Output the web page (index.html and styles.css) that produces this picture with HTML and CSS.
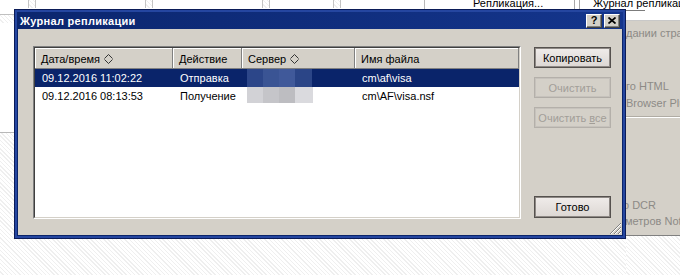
FILE: index.html
```html
<!DOCTYPE html>
<html lang="ru">
<head>
    <meta charset="UTF-8">
    <title>Журнал репликации</title>
    <link rel="stylesheet" href="styles.css">
</head>
<body>
<div class="Desktop">

    <!-- what is left visible of the page behind the dialog -->
    <div class="TopStrip">
        <span class="Gap GapA"></span>
        <span class="Post Hatch"></span>
        <span class="Gap GapB"></span>
        <span class="Post Hatch"></span>
        <span class="Gap GapC"></span>
        <span class="Post Hatch"></span>
        <span class="Gap GapD"></span>
        <span class="Post Hatch"></span>
        <span class="Gap GapE"></span>
        <div class="TabCell"><span class="TabText">Репликация...</span></div>
        <span class="TabSplit"></span>
        <div class="TabActive">
            <span class="TabText">Журнал репликации</span>
            <span class="TabMark"></span>
        </div>
    </div>

    <div class="Lower">
        <div class="LeftArea">
            <div class="Band Hatch"></div>
            <div class="Blank"></div>
            <div class="Floor Hatch"></div>
        </div>
        <div class="SidePanel">
            <div class="SideTop"></div>
            <div class="SideBody">
                <p class="SideLine LineOne">дании страницы</p>
                <p class="SideLine LineTwo">го HTML</p>
                <p class="SideLine LineThree">Browser Plug-in</p>
                <div class="SideRule"></div>
                <p class="SideLine LineFour">о DCR</p>
                <p class="SideLine LineFive">метров Notes</p>
            </div>
            <div class="SideFloor Hatch"></div>
        </div>
    </div>

    <!-- the dialog window -->
    <div class="Dialog">
        <div class="Caption">
            <span class="CaptionTitle">Журнал репликации</span>
            <span class="CapBtn CapHelp">?</span>
            <span class="CapBtn CapClose">
                <svg width="8" height="7" viewBox="0 0 8 7">
                    <path d="M0.5 0.5L7.5 6.5M7.5 0.5L0.5 6.5" stroke="#000" stroke-width="1.7" fill="none"/>
                </svg>
            </span>
        </div>

        <div class="DialogBody">
            <div class="LogList">
                <div class="LogFrame">
                    <div class="LogHead">
                        <div class="HeadCell">Дата/время
                            <svg class="SortMark" width="9" height="10" viewBox="0 0 9 10">
                                <path d="M0.5 4.5L4.5 0.5L8.5 4.5M0.5 5.5L4.5 9.5L8.5 5.5" stroke="#333" fill="none"/>
                            </svg>
                        </div>
                        <div class="HeadCell">Действие</div>
                        <div class="HeadCell">Сервер
                            <svg class="SortMark" width="9" height="10" viewBox="0 0 9 10">
                                <path d="M0.5 4.5L4.5 0.5L8.5 4.5M0.5 5.5L4.5 9.5L8.5 5.5" stroke="#333" fill="none"/>
                            </svg>
                        </div>
                        <div class="HeadCell">Имя файла</div>
                    </div>

                    <div class="LogRow Selected">
                        <div class="LogCell">09.12.2016 11:02:22</div>
                        <div class="LogCell">Отправка</div>
                        <div class="LogCell ServerCell"><span class="Blur BlurDark"></span></div>
                        <div class="LogCell">cm\af\visa</div>
                    </div>
                    <div class="LogRow">
                        <div class="LogCell">09.12.2016 08:13:53</div>
                        <div class="LogCell">Получение</div>
                        <div class="LogCell ServerCell"><span class="Blur BlurLight"></span></div>
                        <div class="LogCell">cm\AF\visa.nsf</div>
                    </div>
                </div>
            </div>

            <div class="Actions">
                <button class="Btn" type="button">Копировать</button>
                <button class="Btn" type="button" disabled>Очистить</button>
                <button class="Btn" type="button" disabled>Очистить <u>в</u>се</button>
                <button class="Btn BtnDone" type="button">Готово</button>
            </div>

            <svg class="Grip" width="12" height="12" viewBox="0 0 12 12">
                <path d="M12 1L1 12M12 5L5 12M12 9L9 12" stroke="#808080" fill="none"/>
                <path d="M12 2L2 12M12 6L6 12M12 10L10 12" stroke="#fff" fill="none"/>
            </svg>
        </div>
    </div>

</div>
</body>
</html>
```

FILE: styles.css
```css
body {
    margin: 0;
    font-family: "Liberation Sans", Arial, sans-serif;
    font-size: 11px;
    color: #000;
}

.Desktop {
    position: relative;
    width: 680px;
    height: 275px;
    overflow: hidden;
    background: #fff;
    display: flex;
    flex-direction: column;
}

.Hatch {
    background: repeating-linear-gradient(45deg, #fff 0 2px, #efefef 2px 3px);
}

/* top strip of the page behind */

.TopStrip {
    display: flex;
    align-items: flex-start;
    height: 14px;
    flex: none;
}

.Gap {
    flex: none;
}

.GapA { width: 28px; }
.GapB { width: 109px; }
.GapC { width: 109px; }
.GapD { width: 63px; }
.GapE { width: 83px; }

.Post {
    flex: none;
    width: 8px;
    height: 8px;
    box-sizing: border-box;
    border-left: 1px solid #c4c4c4;
    border-right: 1px solid #c4c4c4;
}

.TabCell {
    flex: none;
    width: 150px;
    height: 10px;
    box-sizing: border-box;
    padding-left: 48px;
    border-left: 1px solid #b8b8b8;
    overflow: hidden;
}

.TabText {
    display: block;
    margin-top: -3px;
    line-height: 13px;
    white-space: nowrap;
}

.TabSplit {
    flex: none;
    width: 6px;
    height: 11px;
    box-sizing: border-box;
    border-left: 1px solid #a8a8a8;
    border-right: 1px solid #a8a8a8;
}

.TabActive {
    flex: 1;
    padding-left: 13px;
    height: 11px;
    overflow: hidden;
}

.TabMark {
    display: block;
    width: 52px;
    height: 1px;
    background: #7c7c7c;
}

/* lower part of the page behind */

.Lower {
    flex: 1;
    display: flex;
}

.LeftArea {
    width: 626px;
    flex: none;
    display: flex;
    flex-direction: column;
}

.Band {
    height: 8px;
    border-top: 1px solid #c0c0c0;
}

.Blank {
    height: 109px;
}

.Floor {
    flex: 1;
    border-top: 1px solid #b8b8b8;
}

.SidePanel {
    flex: 1;
    display: flex;
    flex-direction: column;
}

.SideTop {
    height: 6px;
    border-bottom: 1px solid #c8c8c8;
}

.SideBody {
    height: 214px;
    background: #d4d0c8;
    border-bottom: 1px solid #808080;
    overflow: hidden;
}

.SideLine {
    margin: 0;
    line-height: 13px;
    white-space: nowrap;
    color: #8c8a86;
}

.LineOne { margin-top: 6px; }
.LineTwo { margin-top: 40px; }
.LineThree { margin-top: 4px; }
.LineFour { margin-top: 81px; margin-left: -3px; }
.LineFive { margin-top: 3px; margin-left: -1px; }

.SideRule {
    margin-top: 6px;
    height: 1px;
    background: #fff;
    border-top: 1px solid #b0aca4;
}

.SideFloor {
    flex: 1;
}

/* dialog */

.Dialog {
    position: absolute;
    left: 14px;
    top: 9px;
    width: 612px;
    height: 230px;
    box-sizing: border-box;
    border: 1px solid #0b1c58;
    padding: 2px;
    background: #2546a0;
    display: flex;
    flex-direction: column;
}

.Caption {
    height: 17px;
    flex: none;
    display: flex;
    align-items: center;
    gap: 2px;
    padding: 0 3px 0 3px;
    background: linear-gradient(90deg, #0b266e, #14358c);
}

.CaptionTitle {
    flex: 1;
    color: #fff;
    font-weight: bold;
    letter-spacing: 0.3px;
    white-space: nowrap;
}

.CapBtn {
    width: 16px;
    height: 14px;
    box-sizing: border-box;
    display: flex;
    align-items: center;
    justify-content: center;
    background: #d4d0c8;
    border: 1px solid;
    border-color: #fff #404040 #404040 #fff;
    box-shadow: inset -1px -1px #808080;
    font-weight: bold;
    font-size: 11px;
    line-height: 11px;
}

.DialogBody {
    position: relative;
    flex: 1;
    display: flex;
    background: #d4d0c8;
    border: 1px solid #0a246a;
    border-top: none;
    padding: 17px 11px 16px 15px;
}

.LogList {
    flex: 1;
    display: flex;
    border: 1px solid;
    border-color: #808080 #fff #fff #808080;
}

.LogFrame {
    flex: 1;
    background: #fff;
    border: 1px solid;
    border-color: #404040 #d4d0c8 #d4d0c8 #404040;
}

.LogHead,
.LogRow {
    display: grid;
    grid-template-columns: 138px 69px 113px 1fr;
}

.HeadCell {
    height: 21px;
    box-sizing: border-box;
    display: flex;
    align-items: center;
    gap: 4px;
    padding: 1px 0 0 6px;
    background: #d4d0c8;
    border-right: 1px solid #808080;
    border-bottom: 1px solid #808080;
    box-shadow: inset 1px 1px #fff;
    white-space: nowrap;
}

.SortMark {
    flex: none;
}

.LogRow {
    height: 18px;
}

.LogCell {
    line-height: 18px;
    padding-left: 7px;
    white-space: nowrap;
}

.Selected {
    background: #0a246a;
    color: #fff;
}

.ServerCell {
    padding-left: 5px;
}

.Blur {
    display: block;
    width: 65px;
}

.BlurDark {
    height: 18px;
    background: linear-gradient(90deg, #2c4689 0 16px, #3a5494 16px 32px, #40599a 32px 48px, #2b4587 48px);
}

.BlurLight {
    height: 16px;
    width: 66px;
    background: linear-gradient(90deg, #d2d2d6 0 16px, #c5c5c9 16px 32px, #bdbdc1 32px 48px, #dadade 48px);
}

.Actions {
    width: 77px;
    flex: none;
    margin-left: 13px;
    display: flex;
    flex-direction: column;
    gap: 9px;
    padding: 1px 0 1px 0;
}

.Btn {
    width: 77px;
    height: 21px;
    box-sizing: border-box;
    padding: 0;
    font-family: "Liberation Sans", Arial, sans-serif;
    font-size: 11px;
    color: #000;
    background: linear-gradient(#f0ecea, #dcd7d3);
    border: 1px solid #55514e;
    box-shadow: inset 0 0 0 1px #8e8985;
}

.Btn:disabled {
    color: #a29e98;
    background: #d4d0c8;
    border-color: #b4b0aa;
    box-shadow: inset 0 0 0 1px #c6c2bc;
}

.BtnDone {
    margin-top: auto;
    height: 22px;
}

.Grip {
    position: absolute;
    right: 1px;
    bottom: 1px;
}
```
